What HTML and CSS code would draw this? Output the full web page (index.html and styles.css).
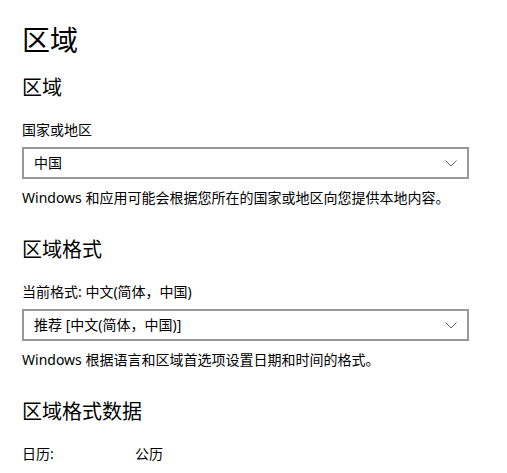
FILE: index.html
```html
<!DOCTYPE html>
<html lang="zh-CN">
<head>
<meta charset="utf-8">
<title>区域</title>
<link rel="stylesheet" href="styles.css">
</head>
<body>
<main class="page">
  <h1 class="title">区域</h1>

  <section class="group group-first">
    <h2 class="group-title">区域</h2>
    <label class="field-label">国家或地区</label>
    <div class="select">
      <span class="select-value">中国</span>
      <svg class="chevron" width="12" height="7" viewBox="0 0 12 7"><path d="M0.5 0.5 L6 6 L11.5 0.5" fill="none" stroke="#666" stroke-width="1"/></svg>
    </div>
    <p class="desc">Windows 和应用可能会根据您所在的国家或地区向您提供本地内容。</p>
  </section>

  <section class="group">
    <h2 class="group-title">区域格式</h2>
    <label class="field-label">当前格式: 中文(简体，中国)</label>
    <div class="select">
      <span class="select-value">推荐 [中文(简体，中国)]</span>
      <svg class="chevron" width="12" height="7" viewBox="0 0 12 7"><path d="M0.5 0.5 L6 6 L11.5 0.5" fill="none" stroke="#666" stroke-width="1"/></svg>
    </div>
    <p class="desc">Windows 根据语言和区域首选项设置日期和时间的格式。</p>
  </section>

  <section class="group">
    <h2 class="group-title">区域格式数据</h2>
    <div class="data-row">
      <span class="data-key">日历:</span>
      <span class="data-val">公历</span>
    </div>
  </section>
</main>
</body>
</html>
```

FILE: styles.css
```css
html, body {
  margin: 0;
  padding: 0;
  background: #ffffff;
}

body {
  font-family: "Segoe UI", "Noto Sans", "Noto Sans CJK SC", sans-serif;
  color: #000000;
  font-size: 14px;
}

.page {
  padding: 20px 0 0 22px;
  display: flex;
  flex-direction: column;
}

.title {
  margin: 0;
  font-size: 28px;
  line-height: 40px;
  font-weight: 400;
}

.group {
  display: flex;
  flex-direction: column;
  margin-top: 28px;
}

.group-first {
  margin-top: 14px;
}

.group-title {
  margin: 0 0 18px 0;
  font-size: 20px;
  line-height: 28px;
  font-weight: 400;
}

.field-label {
  display: block;
  font-size: 14px;
  line-height: 20px;
  margin-bottom: 7px;
}

.select {
  box-sizing: border-box;
  width: 447px;
  height: 32px;
  border: 2px solid #999999;
  display: flex;
  align-items: center;
  justify-content: space-between;
  padding: 0 10px 0 10px;
}

.select-value {
  font-size: 14px;
  line-height: 20px;
}

.chevron {
  display: block;
}

.desc {
  margin: 9px 0 0 0;
  font-size: 14px;
  line-height: 20px;
}

.data-row {
  display: flex;
  font-size: 14px;
  line-height: 20px;
}

.data-key {
  width: 113px;
}
```
